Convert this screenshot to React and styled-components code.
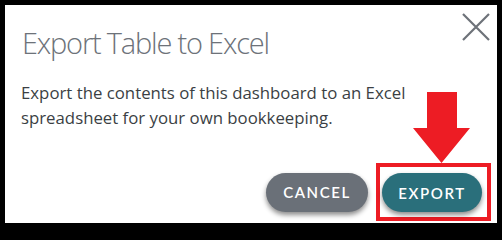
import React from "react";
import styled, { createGlobalStyle } from "styled-components";

const GlobalStyle = createGlobalStyle`
  html, body {
    margin: 0;
    padding: 0;
    background: #000000;
  }
  #root {
    width: 502px;
    height: 228px;
  }
`;

const Frame = styled.div`
  box-sizing: border-box;
  width: 502px;
  height: 228px;
  padding: 5px;
  background: #000000;
`;

const Dialog = styled.div`
  position: relative;
  box-sizing: border-box;
  height: 100%;
  background: #ffffff;
  padding: 0 15px 2px 17px;
  display: flex;
  flex-direction: column;
`;

const Header = styled.div`
  display: flex;
  justify-content: space-between;
  align-items: flex-start;
  height: 60px;
`;

const Title = styled.h2`
  margin: 20px 0 0 0;
  font-family: "Open Sans", "Liberation Sans", sans-serif;
  font-weight: 300;
  font-size: 29px;
  letter-spacing: -1.2px;
  line-height: 36px;
  color: #6d7279;
`;

const CloseButton = styled.button`
  margin: 8px -8px 0 0;
  padding: 0;
  width: 28px;
  height: 28px;
  border: none;
  background: transparent;
  cursor: pointer;
  display: flex;
`;

const Message = styled.p`
  margin: 15px 0 0 -1px;
  font-family: "Open Sans", "Liberation Sans", sans-serif;
  font-size: 16.8px;
  line-height: 25px;
  color: #3b3f44;
  max-width: 420px;
`;

const Footer = styled.div`
  margin-top: auto;
  display: flex;
  justify-content: flex-end;
  align-items: center;
  gap: 8px;
  margin-right: -9px;
`;

const Highlight = styled.div`
  border: 4px solid #ed1c24;
  padding: 6px 5px 5px 2px;
  display: flex;
`;

const PillButton = styled.button`
  height: 39px;
  width: ${({ $w }) => $w}px;
  border: none;
  border-radius: 20px;
  background: ${({ $bg }) => $bg};
  color: #ffffff;
  font-family: "Lato", "Open Sans", sans-serif;
  font-weight: 600;
  font-size: 15px;
  letter-spacing: 1.6px;
  box-shadow: 0 3px 5px rgba(0, 0, 0, 0.45);
  cursor: pointer;
  padding: 0;
`;

const Arrow = styled.svg`
  position: absolute;
  left: 408px;
  top: 87px;
`;

function CloseIcon() {
  return (
    <svg width="28" height="28" viewBox="0 0 28 28">
      <path d="M1 1 L27 27 M27 1 L1 27" stroke="#6d7279" strokeWidth="2.2" fill="none" />
    </svg>
  );
}

export default function App() {
  return (
    <>
      <GlobalStyle />
      <Frame>
        <Dialog>
          <Header>
            <Title>Export Table to Excel</Title>
            <CloseButton aria-label="Close">
              <CloseIcon />
            </CloseButton>
          </Header>
          <Message>
            Export the contents of this dashboard to an Excel spreadsheet for your own bookkeeping.
          </Message>
          <Footer>
            <PillButton $w={102} $bg="#6a7078">CANCEL</PillButton>
            <Highlight>
              <PillButton $w={100} $bg="#2a6f7b">EXPORT</PillButton>
            </Highlight>
          </Footer>
          <Arrow width="57" height="71" viewBox="0 0 57 71">
            <path d="M14 0 H44 V36 H57 L28.5 71 L0 36 H14 Z" fill="#ed1c24" />
          </Arrow>
        </Dialog>
      </Frame>
    </>
  );
}
